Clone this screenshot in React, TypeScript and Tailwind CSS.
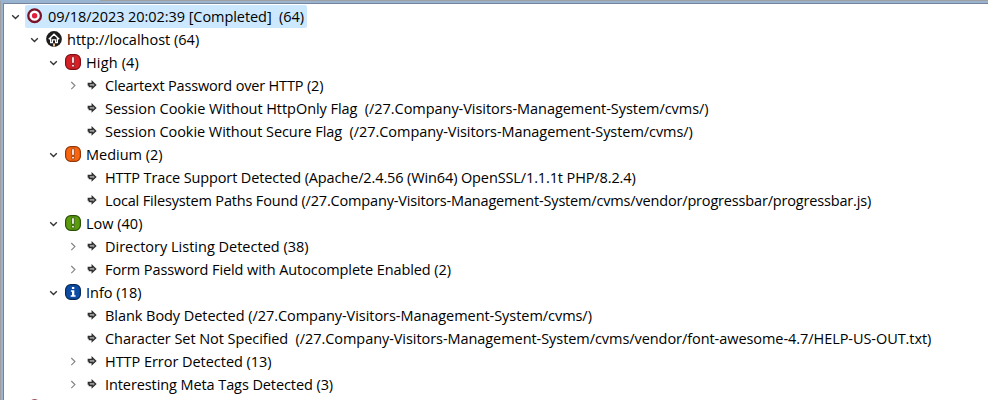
import React from "react";

type Kind = "target" | "home" | "high" | "medium" | "low" | "info" | "arrow";
type Row = { indent: string; state: "open" | "closed" | "leaf"; kind: Kind; text: string; tracking: string };

const L0 = "pl-[4px]";
const L1 = "pl-[23px]";
const L2 = "pl-[42px]";
const L3 = "pl-[61px]";
const P = "/27.Company-Visitors-Management-System/cvms/";

const rows: Row[] = [
  { indent: L0, state: "open", kind: "target", text: "09/18/2023 20:02:39 [Completed]  (64)", tracking: "tracking-[-0.06px]" },
  { indent: L1, state: "open", kind: "home", text: "http://localhost (64)", tracking: "" },
  { indent: L2, state: "open", kind: "high", text: "High (4)", tracking: "tracking-[0.15px]" },
  { indent: L3, state: "closed", kind: "arrow", text: "Cleartext Password over HTTP (2)", tracking: "tracking-[-0.17px]" },
  { indent: L3, state: "leaf", kind: "arrow", text: `Session Cookie Without HttpOnly Flag  (${P})`, tracking: "tracking-[-0.05px]" },
  { indent: L3, state: "leaf", kind: "arrow", text: `Session Cookie Without Secure Flag  (${P})`, tracking: "tracking-[-0.06px]" },
  { indent: L2, state: "open", kind: "medium", text: "Medium (2)", tracking: "" },
  { indent: L3, state: "leaf", kind: "arrow", text: "HTTP Trace Support Detected (Apache/2.4.56 (Win64) OpenSSL/1.1.1t PHP/8.2.4)", tracking: "tracking-[-0.12px]" },
  { indent: L3, state: "leaf", kind: "arrow", text: `Local Filesystem Paths Found (${P}vendor/progressbar/progressbar.js)`, tracking: "tracking-[-0.17px]" },
  { indent: L2, state: "open", kind: "low", text: "Low (40)", tracking: "" },
  { indent: L3, state: "closed", kind: "arrow", text: "Directory Listing Detected (38)", tracking: "" },
  { indent: L3, state: "closed", kind: "arrow", text: "Form Password Field with Autocomplete Enabled (2)", tracking: "tracking-[-0.1px]" },
  { indent: L2, state: "open", kind: "info", text: "Info (18)", tracking: "" },
  { indent: L3, state: "leaf", kind: "arrow", text: `Blank Body Detected (${P})`, tracking: "tracking-[-0.05px]" },
  { indent: L3, state: "leaf", kind: "arrow", text: `Character Set Not Specified  (${P}vendor/font-awesome-4.7/HELP-US-OUT.txt)`, tracking: "tracking-[-0.06px]" },
  { indent: L3, state: "closed", kind: "arrow", text: "HTTP Error Detected (13)", tracking: "tracking-[-0.04px]" },
  { indent: L3, state: "closed", kind: "arrow", text: "Interesting Meta Tags Detected (3)", tracking: "tracking-[-0.09px]" },
];

function Expander({ state }: { state: Row["state"] }) {
  return (
    <svg width="17" height="23" viewBox="0 0 17 23" fill="none" className="shrink-0">
      {state === "open" && <path d="M4.2 10.3 7.5 13.5 10.8 10.3" stroke="#333" strokeWidth="1.4" />}
      {state === "closed" && <path d="M6.3 8 9.9 11.6 6.3 15.2" stroke="#858585" strokeWidth="1.2" />}
    </svg>
  );
}

const badge = {
  high: ["#d81f26", "#7d1015"],
  medium: ["#f9650f", "#8f3506"],
  low: ["#5a9c0c", "#2a4f06"],
  info: ["#0c4ba6", "#062a56"],
};

function Icon({ kind }: { kind: Kind }) {
  const cls = "mt-[3px] shrink-0 self-start";
  if (kind === "target")
    return (
      <svg width="16" height="16" viewBox="0 0 16 16" className={cls}>
        <circle cx="7.6" cy="7.7" r="6.3" fill="#fff" stroke="#7b1328" strokeWidth="2.3" />
        <circle cx="7.6" cy="7.7" r="2.7" fill="#e0203c" />
      </svg>
    );
  if (kind === "home")
    return (
      <svg width="16" height="16" viewBox="0 0 16 16" className={cls}>
        <circle cx="8" cy="8" r="7.9" fill="#1c1c1c" />
        <path d="M2.8 8.3 8 3.2 13.2 8.3M4.7 7.6V11.6H6.7V9H9.3V11.6H11.3V7.6" fill="none" stroke="#fff" strokeWidth="1.4" />
        <path d="M7 9.5h2V12H7z" fill="#1c1c1c" />
        <path d="M7 12.6h2v2.9H7z" fill="#f3c492" />
      </svg>
    );
  if (kind === "arrow")
    return (
      <svg width="16" height="16" viewBox="0 0 16 16" className={cls}>
        <path d="M4.3 6.4H8.2V4.6L11.7 8 8.2 11.2V9.5H5.3V8H4.3Z" fill="#999" stroke="#2e2e2e" strokeWidth="1.3" />
      </svg>
    );
  const [fill, edge] = badge[kind];
  return (
    <svg width="16" height="16" viewBox="0 0 16 16" className={cls}>
      <rect x=".6" y=".6" width="14.8" height="14.8" rx="5.2" fill={fill} stroke={edge} strokeWidth="1.2" />
      {kind === "info" ? (
        <path d="M6.9 3h2.4v2H6.9zM5.9 6.2h3.4v5h1.3v1.6H5.7v-1.6H7V7.8H5.9z" fill="#fff" />
      ) : (
        <path d="M6.7 2.8h2.6v6.5H6.7zM6.7 10.4h2.6v2.5H6.7z" fill="#fff" stroke={edge} strokeWidth=".8" />
      )}
    </svg>
  );
}

export default function App() {
  return (
    <div className="flex h-[400px] w-[988px] flex-col overflow-hidden bg-white font-['Open_Sans','Noto_Sans',sans-serif] text-[14.5px] text-black">
      <div className="flex h-px shrink-0">
        <div className="w-[100px] bg-[#99b4d1]" />
        <div className="flex-1 bg-[#a0a0a0]" />
      </div>
      <div className="min-h-0 flex-1 border-l border-[#a0a0a0]">
        <div className="h-full border-t-2 border-l-2 border-[#99b4d1]">
          <div className="h-full overflow-hidden border-t border-l border-[#75849b] pt-px">
            {rows.map((r, i) => (
              <div key={i} className={`flex h-[23px] items-center ${r.indent}`}>
                <Expander state={r.state} />
                <div className={`flex h-full items-center rounded-[2px] pr-[3px] pl-[2px] ${i === 0 ? "bg-[#cce8ff]" : ""}`}>
                  <Icon kind={r.kind} />
                  <span className={`ml-[5px] leading-[23px] whitespace-pre ${r.tracking}`}>{r.text}</span>
                </div>
              </div>
            ))}
            <div className="flex h-[23px] pl-[23px]">
              <Icon kind="target" />
            </div>
          </div>
        </div>
      </div>
    </div>
  );
}
